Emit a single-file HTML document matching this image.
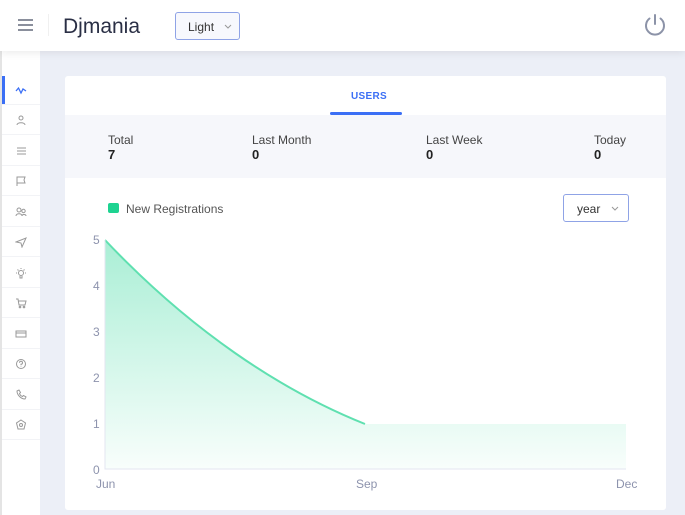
<!DOCTYPE html>
<html><head><style>
*{margin:0;padding:0;box-sizing:border-box}
body{width:685px;height:515px;overflow:hidden;background:#eceff7;font-family:"Liberation Sans",sans-serif;position:relative}
.top{position:absolute;left:0;top:0;width:685px;height:51px;background:#fff;box-shadow:0 2px 8px rgba(0,0,0,.08);z-index:2}
.side{position:absolute;left:0;top:51px;width:40px;height:464px;background:#fff;border-left:2px solid #e4e4e4}
.si{position:absolute;left:0;width:38px;height:30px;border-bottom:1px solid #f2f3f6;display:flex;align-items:center;justify-content:center}
.card{position:absolute;left:65px;top:76px;width:601px;height:434px;background:#fff;border-radius:3px}
.t{position:absolute;font-size:12px;color:#444}
.v{position:absolute;font-size:13px;font-weight:bold;color:#222}
.ax{position:absolute;font-size:12px;color:#8d93ad}
.chev{position:absolute}
</style></head><body>
<div class="top">
 <div style="position:absolute;left:18px;top:19px;width:15px">
  <div style="height:2px;background:#8a8f9c;margin-bottom:3px"></div><div style="height:2px;background:#8a8f9c;margin-bottom:3px"></div><div style="height:2px;background:#8a8f9c"></div></div>
 <div style="position:absolute;left:48px;top:14px;width:1px;height:22px;background:#f0f0f0"></div>
 <div style="position:absolute;left:63px;top:15px;font-size:21px;color:#2a2f45">Djmania</div>
 <div style="position:absolute;left:175px;top:12px;width:65px;height:28px;border:1px solid #8fa3e6;border-radius:3px;background:#f7f8fd;font-size:12px;color:#333;padding:7px 0 0 12px">Light<svg class="chev" style="left:48px;top:11px" width="8" height="5" viewBox="0 0 8 5" fill="none" stroke="#999" stroke-width="1"><path d="M1 1l3 3 3-3"/></svg></div>
 <svg style="position:absolute;left:643px;top:13px" width="24" height="24" viewBox="0 0 24 24" fill="none" stroke="#8c93a8" stroke-width="2" stroke-linecap="round"><path d="M6.5 5.5a9 9 0 1 0 11 0"/><path d="M12 2v9"/></svg>
</div>
<div class="side">
 <div style="position:absolute;left:0;top:25px;width:3px;height:28px;background:#3b6ff5"></div>
 <div class="si" style="top:24px"><svg width="12" height="12" viewBox="0 0 12 12" fill="none" stroke="#3b6ff5" stroke-width="1.3"><path d="M1 7l2.5-3 2.5 5 2-4 3 2"/></svg></div>
 <div class="si" style="top:54px"><svg width="12" height="12" viewBox="0 0 12 12" fill="none" stroke="#999" stroke-width="1"><circle cx="6" cy="4" r="2"/><path d="M2 11c0-3 8-3 8 0"/></svg></div>
 <div class="si" style="top:85px"><svg width="12" height="12" viewBox="0 0 12 12" fill="none" stroke="#999" stroke-width="1"><path d="M2 3h9M2 6h9M2 9h9"/></svg></div>
 <div class="si" style="top:115px"><svg width="12" height="12" viewBox="0 0 12 12" fill="none" stroke="#999" stroke-width="1"><path d="M2 11V2h8l-1 3 1 3H2"/></svg></div>
 <div class="si" style="top:146px"><svg width="12" height="12" viewBox="0 0 12 12" fill="none" stroke="#999" stroke-width="1"><circle cx="4" cy="4" r="2"/><circle cx="8.5" cy="5" r="1.7"/><path d="M1 10c0-3 6-3 6 0M7 10c0-2 4-2 4 0"/></svg></div>
 <div class="si" style="top:176px"><svg width="12" height="12" viewBox="0 0 12 12" fill="none" stroke="#999" stroke-width="1"><path d="M1 6l10-4-4 9-1-4z"/></svg></div>
 <div class="si" style="top:207px"><svg width="12" height="12" viewBox="0 0 12 12" fill="none" stroke="#999" stroke-width="1"><circle cx="6" cy="6" r="2.5"/><path d="M5 9v2h2V9M6 1v1M1 6h1M10 6h1M2.5 2.5l1 1M9.5 2.5l-1 1"/></svg></div>
 <div class="si" style="top:237px"><svg width="12" height="12" viewBox="0 0 12 12" fill="none" stroke="#999" stroke-width="1"><path d="M1 2h2l1 6h6l1-4H3.5"/><circle cx="5" cy="10" r=".8"/><circle cx="9" cy="10" r=".8"/></svg></div>
 <div class="si" style="top:268px"><svg width="12" height="12" viewBox="0 0 12 12" fill="none" stroke="#999" stroke-width="1"><rect x="1" y="3" width="10" height="6"/><path d="M1 5h10"/></svg></div>
 <div class="si" style="top:298px"><svg width="12" height="12" viewBox="0 0 12 12" fill="none" stroke="#999" stroke-width="1"><circle cx="6" cy="6" r="4.5"/><path d="M4.5 4.8a1.5 1.5 0 1 1 1.5 1.5v1M6 8.5v.5"/></svg></div>
 <div class="si" style="top:329px"><svg width="12" height="12" viewBox="0 0 12 12" fill="none" stroke="#999" stroke-width="1"><path d="M2 2l2-1 1.5 2.5-1 1c.5 1.5 1.5 2.5 3 3l1-1L11 8l-1 2C6 10 2 6 2 2z"/></svg></div>
 <div class="si" style="top:359px"><svg width="12" height="12" viewBox="0 0 12 12" fill="none" stroke="#999" stroke-width="1"><path d="M6 1l4.5 3-1.5 6H3L1.5 4z"/><circle cx="6" cy="6" r="1.5"/></svg></div>
</div>
<div class="card">
 <div style="position:absolute;left:286px;top:15px;font-size:10px;font-weight:bold;color:#3b6ff5;letter-spacing:.3px">USERS</div>
 <div style="position:absolute;left:265px;top:36px;width:72px;height:3px;background:#3b6ff5;border-radius:2px"></div>
 <div style="position:absolute;left:0;top:39px;width:601px;height:63px;background:#f6f7fb"></div>
 <div class="t" style="left:43px;top:57px">Total</div><div class="v" style="left:43px;top:71px">7</div>
 <div class="t" style="left:187px;top:57px">Last Month</div><div class="v" style="left:187px;top:71px">0</div>
 <div class="t" style="left:361px;top:57px">Last Week</div><div class="v" style="left:361px;top:71px">0</div>
 <div class="t" style="left:529px;top:57px">Today</div><div class="v" style="left:529px;top:71px">0</div>
 <div style="position:absolute;left:43px;top:127px;width:11px;height:10px;background:#1ed391;border-radius:2px"></div>
 <div class="t" style="left:61px;top:126px;color:#555">New Registrations</div>
 <div style="position:absolute;left:498px;top:118px;width:66px;height:28px;border:1px solid #8fa3e6;border-radius:3px;font-size:12px;color:#333;padding:7px 0 0 13px">year<svg class="chev" style="left:47px;top:11px" width="8" height="5" viewBox="0 0 8 5" fill="none" stroke="#999" stroke-width="1"><path d="M1 1l3 3 3-3"/></svg></div>
</div>
<svg style="position:absolute;left:0;top:0" width="685" height="515">
 <defs><linearGradient id="g" x1="0" y1="0" x2="0" y2="1"><stop offset="0" stop-color="#1ed391" stop-opacity=".38"/><stop offset="1" stop-color="#1ed391" stop-opacity=".03"/></linearGradient></defs>
 <path d="M105 240 C190 330 280 390 365 424 L626 424 L626 469 L105 469Z" fill="url(#g)"/>
 <path d="M105 240 C190 330 280 390 365 424" fill="none" stroke="#5fe0b0" stroke-width="2"/>
 <path d="M105 240V469H626" fill="none" stroke="#e3e6f0" stroke-width="1"/>
</svg>
<div class="ax" style="left:93px;top:233px">5</div>
<div class="ax" style="left:93px;top:279px">4</div>
<div class="ax" style="left:93px;top:325px">3</div>
<div class="ax" style="left:93px;top:371px">2</div>
<div class="ax" style="left:93px;top:417px">1</div>
<div class="ax" style="left:93px;top:463px">0</div>
<div class="ax" style="left:96px;top:477px">Jun</div>
<div class="ax" style="left:356px;top:477px">Sep</div>
<div class="ax" style="left:616px;top:477px">Dec</div>
</body></html>
